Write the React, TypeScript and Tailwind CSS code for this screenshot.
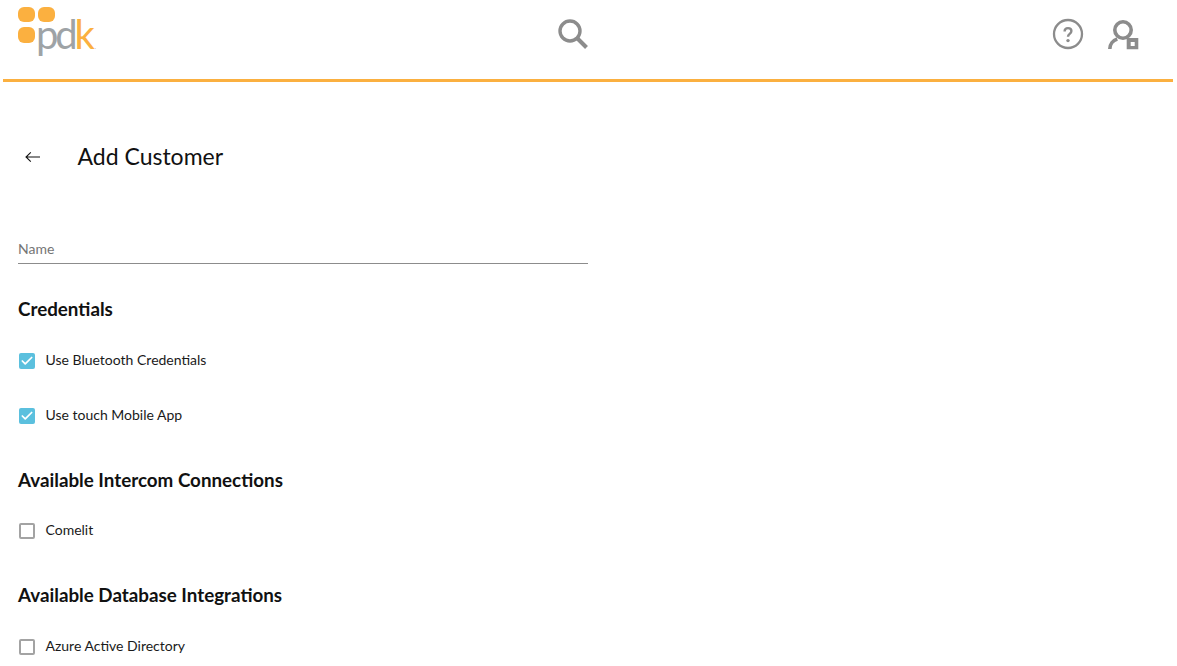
import { Check } from 'lucide-react';

const font = "font-['Lato','Noto_Sans',sans-serif]";

function Logo() {
  return (
    <div className="relative w-[84px] h-[60px]">
      <div className="grid grid-cols-2 gap-x-[3px] gap-y-[5px] w-[37px] pt-[7px]">
        <span className="block h-[15px] w-[17px] rounded-[6px] bg-[#fbb040]" />
        <span className="block h-[15px] w-[17px] rounded-[6px] bg-[#fbb040]" />
        <span className="block h-4 w-[17px] rounded-[6px] bg-[#fbb040]" />
      </div>
      <div className="absolute left-[18px] top-[14px] text-[40px] leading-[40px] tracking-[-3.2px] text-[#9ea3a6]">
        pd<span className="text-[#fbb040]">k</span>
        <span className="text-[6px] leading-none tracking-normal ml-[3px]">.</span>
      </div>
    </div>
  );
}

function SearchIcon() {
  return (
    <svg width="32" height="32" viewBox="0 0 32 32" fill="none" stroke="#8c8c8c" strokeWidth="3.4">
      <circle cx="12" cy="12" r="10" />
      <path d="M19.5 19.5L28.5 28.5" strokeWidth="4" />
    </svg>
  );
}

function HelpIcon() {
  return (
    <svg width="32" height="32" viewBox="0 0 32 32" fill="none">
      <circle cx="16" cy="16" r="14" stroke="#8c8c8c" strokeWidth="2.3" />
      <path d="M12.6 13.5c0-2.2 1.4-3.4 3.4-3.4s3.4 1.2 3.4 3c0 2.8-3.4 2.8-3.4 5.6" stroke="#8c8c8c" strokeWidth="2.4" />
      <circle cx="16" cy="22.6" r="1.7" fill="#8c8c8c" />
    </svg>
  );
}

function UserIcon() {
  return (
    <svg width="34" height="32" viewBox="0 0 34 32" fill="none">
      <circle cx="16" cy="12" r="8.2" stroke="#8c8c8c" strokeWidth="3.6" />
      <path d="M2.8 31c0-4.5 3-8.5 7.5-10" stroke="#8c8c8c" strokeWidth="3.6" />
      <path fillRule="evenodd" clipRule="evenodd" d="M19.7 20h11.6v11.3H19.7zM23.7 24v4h4v-4z" fill="#8c8c8c" />
    </svg>
  );
}

function BackArrow() {
  return (
    <svg width="16" height="16" viewBox="0 0 16 16" fill="none" stroke="#111" strokeWidth="1.1">
      <path d="M1 8h14M5.8 3.3L1 8l4.8 4.7" />
    </svg>
  );
}

function Option({ label, checked }: { label: string; checked?: boolean }) {
  return (
    <label className="flex items-center gap-[10.5px] h-5 pl-px">
      {checked ? (
        <span className="mt-[2px] flex h-4 w-4 items-center justify-center rounded-[2px] bg-[#5bc0de]">
          <Check size={14} strokeWidth={3} className="text-white" />
        </span>
      ) : (
        <span className="mt-[2px] block h-4 w-4 rounded-[2px] border-2 border-[#a3a3a3] bg-white" />
      )}
      <span className="text-sm text-[#1a1a1a]">{label}</span>
    </label>
  );
}

function SectionTitle({ children }: { children: string }) {
  return <h2 className="text-[18.8px] leading-6 font-bold text-[#111]">{children}</h2>;
}

export default function App() {
  return (
    <div className={`${font} h-screen overflow-hidden bg-white pl-[3px] pr-[4px]`}>
      <header className="flex h-[82px] items-start border-b-[3px] border-[#fbb040] pl-[15px]">
        <Logo />
        <div className="ml-[456px] pt-[19px]">
          <SearchIcon />
        </div>
        <div className="ml-auto flex items-start gap-[23px] pt-[18px] pr-[32px]">
          <HelpIcon />
          <UserIcon />
        </div>
      </header>

      <main className="pl-[15px]">
        <div className="flex items-center pt-[61px]">
          <div className="ml-[7px] mt-[2px] h-4">
            <BackArrow />
          </div>
          <h1 className="ml-[36.5px] text-[23px] leading-[26px] text-[#111]">Add Customer</h1>
        </div>

        <div className="mt-[70px] w-[570px] border-b border-[#8c8c8c] pb-[4px] text-[14px] leading-[20px] text-[#757575]">
          Name
        </div>

        <div className="mt-[33px]">
          <SectionTitle>Credentials</SectionTitle>
        </div>
        <div className="mt-[29px] flex flex-col gap-[35px]">
          <Option label="Use Bluetooth Credentials" checked />
          <Option label="Use touch Mobile App" checked />
        </div>

        <div className="mt-[43px]">
          <SectionTitle>Available Intercom Connections</SectionTitle>
        </div>
        <div className="mt-[28px]">
          <Option label="Comelit" />
        </div>

        <div className="mt-[43px]">
          <SectionTitle>Available Database Integrations</SectionTitle>
        </div>
        <div className="mt-[29px]">
          <Option label="Azure Active Directory" />
        </div>
      </main>
    </div>
  );
}
